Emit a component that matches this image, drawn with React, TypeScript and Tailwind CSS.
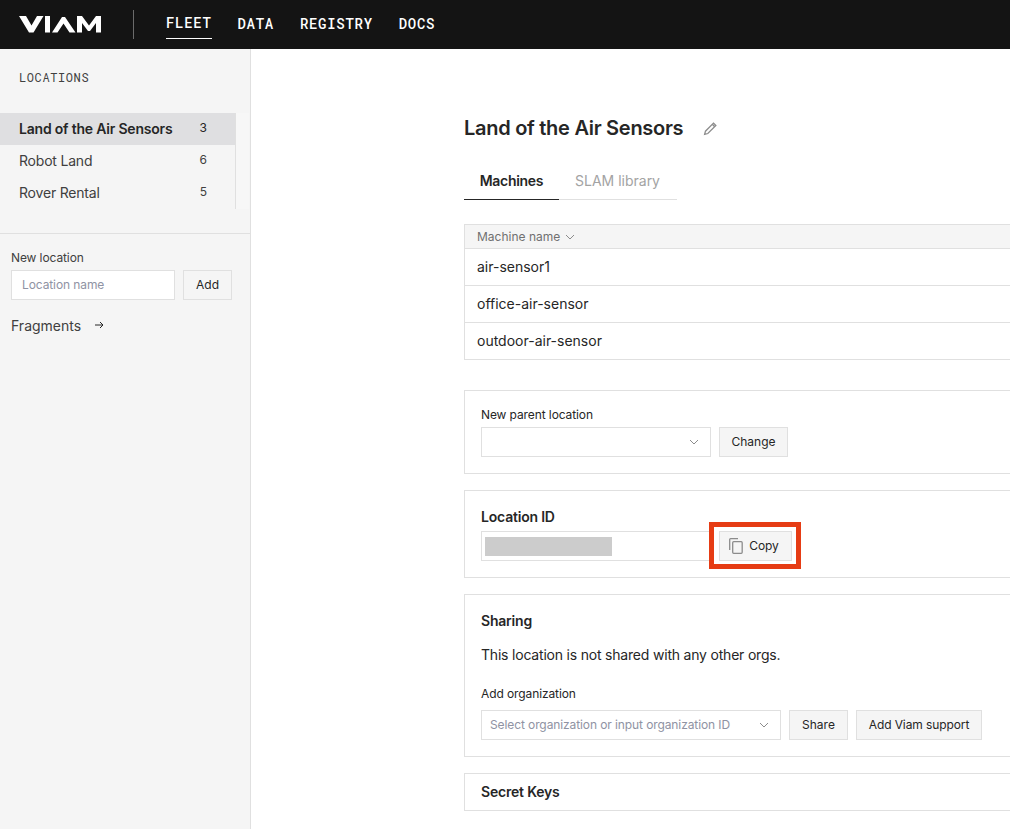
import React from "react";

const sans = "font-['Inter','Liberation_Sans',sans-serif]";
const mono = "font-['Roboto_Mono','DejaVu_Sans_Mono',monospace]";
const btn = "h-[30px] border border-[#e0e0e0] bg-[#f5f5f5] text-[12px] text-[#262626] flex items-center justify-center shrink-0";

function Logo() {
  return (
    <svg width="83" height="17" viewBox="0 0 83 17" className="shrink-0">
      <path fill="#fff" d="M0 0H7L12.500 9.500L18 0H24.500L14.500 16.500H10Z" />
      <rect x="26" y="0" width="5" height="16.500" fill="#fff" />
      <path fill="#fff" d="M33 16.500L43 1H46L56.500 16.500H50.500L44.500 7.500L38.500 16.500Z" />
      <path fill="#fff" d="M58 16.500V0H63L70 9.500L77 0H82V16.500H77V7L71 15H69L63 7V16.500Z" />
    </svg>
  );
}

function Chevron({ className = "" }: { className?: string }) {
  return (
    <svg width="10" height="6" viewBox="0 0 10 6" fill="none" className={className}>
      <path d="M1 1L5 5L9 1" stroke="#8c8c8c" strokeWidth="1" />
    </svg>
  );
}

function Box({ className = "", children }: { className?: string; children: React.ReactNode }) {
  return <section className={"border border-[#e0e0e0] bg-white w-[700px] px-4 " + className}>{children}</section>;
}

const locations = [
  { name: "Land of the Air Sensors", count: 3, active: true },
  { name: "Robot Land", count: 6 },
  { name: "Rover Rental", count: 5 },
];

export default function App() {
  return (
    <div className={"w-[1010px] h-[829px] overflow-hidden flex flex-col bg-white text-[#262626] " + sans}>
      <header className={"h-[49px] shrink-0 bg-[#141414] flex items-center pl-[19px] " + mono}>
        <Logo />
        <div className="w-px h-[29px] bg-[#6b6b6b] ml-[31px] mr-[32px]" />
        <nav className="flex gap-[26px] text-[14px] tracking-[0.7px] text-white font-medium">
          <a className="h-[29px] pb-[3px] flex items-center border-b border-white">FLEET</a>
          <a className="h-[29px] pb-[3px] flex items-center">DATA</a>
          <a className="h-[29px] pb-[3px] flex items-center">REGISTRY</a>
          <a className="h-[29px] pb-[3px] flex items-center">DOCS</a>
        </nav>
      </header>

      <div className="flex flex-1 min-h-0">
        <aside className="w-[251px] shrink-0 bg-[#f5f5f5] border-r border-[#e0e0e0]">
          <h2 className={"pl-[19px] pt-[20px] h-[64px] text-[12px] leading-[16px] tracking-[0.6px] text-[#404040] " + mono}>LOCATIONS</h2>
          <div className="flex">
            <ul className="w-[235px]">
              {locations.map((l) => (
                <li key={l.name} className={"h-8 flex items-center pl-[19px] pr-[28px] pb-[2px] text-[14px] justify-between " + (l.active ? "bg-[#dfdfe1] font-semibold" : "text-[#404040]")}>
                  <span className="tracking-[-0.2px]">{l.name}</span>
                  <span className="text-[12px] font-normal">{l.count}</span>
                </li>
              ))}
            </ul>
            <div className="w-[14px] border-l border-[#e0e0e0] bg-[#f7f7f7]" />
          </div>
          <div className="mt-6 border-t border-[#e0e0e0] px-[11px] pt-[16px]">
            <label className="block text-[12px] leading-[16px] text-[#404040] tracking-[-0.1px]">New location</label>
            <div className="flex gap-2 mt-[4px]">
              <div className="w-[164px] h-[30px] border border-[#e0e0e0] bg-white text-[12px] text-[#8f93a3] flex items-center px-[10px] tracking-[-0.1px]">Location name</div>
              <button className={btn + " w-[49px]"}>Add</button>
            </div>
            <div className="flex items-center mt-[15px] text-[14px] text-[#404040] h-5">
              <span>Fragments</span>
              <svg width="10" height="10" viewBox="0 0 10 10" fill="none" className="ml-[13px]">
                <path d="M1 5H9M6 2L9 5L6 8" stroke="#262626" strokeWidth="1" />
              </svg>
            </div>
          </div>
        </aside>

        <main className="flex-1 min-w-0 pl-[213px] pt-[67px] overflow-hidden">
          <div className="flex items-center h-6">
            <h1 className="text-[20px] font-semibold tracking-[-0.28px]">Land of the Air Sensors</h1>
            <svg width="15" height="15" viewBox="0 0 14 14" fill="none" className="ml-[20px]">
              <path d="M1.500 12.500L2.300 9.500L9.800 2L12 4.200L4.500 11.700Z M8.700 3.100L10.900 5.300" stroke="#8c8c8c" strokeWidth="1.200" />
            </svg>
          </div>

          <div className="flex w-[213px] mt-[25px] h-[35px] border-b border-[#e0e0e0] text-[14px]">
            <div className="w-[95px] h-[35px] pb-[3px] border-b border-[#262626] flex items-center justify-center font-semibold tracking-[-0.3px]">Machines</div>
            <div className="flex-1 h-[35px] pb-[4px] flex items-center pl-4 text-[#a3a3a3]">SLAM library</div>
          </div>

          <div className="w-[700px] mt-6 border border-[#e0e0e0] text-[14px]">
            <div className="h-6 bg-[#f5f5f5] border-b border-[#e0e0e0] flex items-center pl-3 text-[12px] text-[#707070]">
              <span>Machine name</span>
              <Chevron className="ml-[5px]" />
            </div>
            <div className="h-[37px] pb-[2px] flex items-center pl-3 border-b border-[#e0e0e0]">air-sensor1</div>
            <div className="h-[37px] pb-[2px] flex items-center pl-3 border-b border-[#e0e0e0]">office-air-sensor</div>
            <div className="h-[36px] pb-[2px] flex items-center pl-3">outdoor-air-sensor</div>
          </div>

          <Box className="mt-[30px] h-[84px] pt-4">
            <label className="block text-[12px] leading-[16px] tracking-[-0.1px]">New parent location</label>
            <div className="flex gap-2 mt-[4px]">
              <div className="w-[230px] h-[30px] border border-[#e0e0e0] flex items-center justify-end pr-[11px]"><Chevron /></div>
              <button className={btn + " w-[69px]"}>Change</button>
            </div>
          </Box>

          <Box className="mt-4 h-[88px] pt-4">
            <h3 className="text-[14px] leading-5 font-semibold tracking-[-0.2px]">Location ID</h3>
            <div className="flex gap-2 mt-1">
              <div className="w-[230px] h-[30px] border border-[#e0e0e0] flex items-center pl-[3px]">
                <div className="w-[127px] h-[19px] bg-[#cccccc]" />
              </div>
              <div className="relative">
                <button className={btn + " w-[73px] gap-[6px] pr-[3px]"}>
                  <svg width="14" height="16" viewBox="0 0 14 16" fill="none">
                    <path d="M0.700 12V1.500C0.700 1 1 0.700 1.500 0.700H9" stroke="#8c8c8c" strokeWidth="1.300" />
                    <rect x="3.700" y="3.700" width="9.500" height="11.600" rx="1" stroke="#8c8c8c" strokeWidth="1.300" />
                  </svg>
                  <span className="tracking-[-0.1px]">Copy</span>
                </button>
                <div className="absolute -left-[10px] -top-[9px] w-[92px] h-[47px] border-[5px] border-[#e63c14]" />
              </div>
            </div>
          </Box>

          <Box className="mt-4 h-[163px] pt-4">
            <h3 className="text-[14px] leading-5 font-semibold tracking-[-0.2px]">Sharing</h3>
            <p className="text-[14px] leading-5 mt-[14px] tracking-[-0.2px]">This location is not shared with any other orgs.</p>
            <label className="block text-[12px] leading-4 mt-[21px] tracking-[-0.1px]">Add organization</label>
            <div className="flex gap-2 mt-[8px]">
              <div className="w-[300px] h-[30px] border border-[#e0e0e0] flex items-center justify-between px-2 pr-[11px] text-[12px] text-[#8f93a3]">
                <span className="tracking-[-0.1px]">Select organization or input organization ID</span>
                <Chevron />
              </div>
              <button className={btn + " w-[59px]"}>Share</button>
              <button className={btn + " w-[126px] tracking-[-0.1px]"}>Add Viam support</button>
            </div>
          </Box>

          <Box className="mt-4 h-[38px] pb-[2px] flex items-center">
            <h3 className="text-[14px] font-semibold tracking-[-0.2px]">Secret Keys</h3>
          </Box>
        </main>
      </div>
    </div>
  );
}
